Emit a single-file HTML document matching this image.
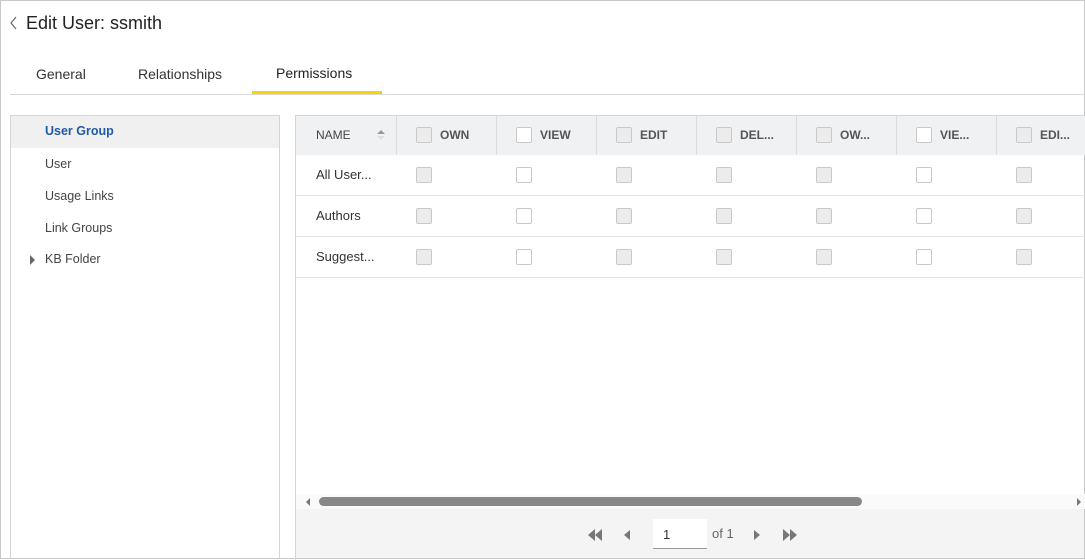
<!DOCTYPE html><html><head><style>
body{margin:0;width:1085px;height:559px;overflow:hidden;font-family:"Liberation Sans",sans-serif;background:#fff;position:relative}
.frame{position:absolute;left:0;top:0;width:1083px;height:557px;border:1px solid #c8c8c8}
.abs{position:absolute}
.cb{position:absolute;width:14px;height:14px;border:1px solid #c8c8c8;border-radius:2px;background:#ececec}
.cb.w{background:#fff}
.h{position:absolute;top:116px;height:39px;border-left:1px solid #dcdcdc;font-size:12px;font-weight:bold;color:#555;line-height:38px}
.nm{position:absolute;left:316px;font-size:13px;color:#333}
.row{position:absolute;left:296px;width:789px;height:1px;background:#e4e4e4}
.li{position:absolute;left:45px;font-size:12.5px;color:#444}
</style></head><body>
<div class="frame"></div>
<svg class="abs" style="left:9px;top:16px" width="10" height="14"><path d="M7 1L2 7l5 6" stroke="#666" fill="none" stroke-width="1.2"/></svg>
<div class="abs" style="left:26px;top:13px;font-size:18px;color:#222">Edit User: ssmith</div>
<div class="abs" style="left:36px;top:66px;font-size:14px;color:#333">General</div>
<div class="abs" style="left:138px;top:66px;font-size:14px;color:#333">Relationships</div>
<div class="abs" style="left:276px;top:65px;font-size:14px;color:#222">Permissions</div>
<div class="abs" style="left:252px;top:91px;width:130px;height:3px;background:#f5d600"></div>
<div class="abs" style="left:10px;top:94px;width:1075px;height:1px;background:#d8d8d8"></div>
<div class="abs" style="left:10px;top:115px;width:268px;height:442px;border:1px solid #d4d4d4;border-bottom:none"></div>
<div class="abs" style="left:11px;top:116px;width:268px;height:32px;background:#f0f0f0"></div>
<div class="li" style="top:124px;color:#1f5aa8;font-weight:bold">User Group</div>
<div class="li" style="top:157px">User</div>
<div class="li" style="top:189px">Usage Links</div>
<div class="li" style="top:221px">Link Groups</div>
<div class="abs" style="left:30px;top:255px;width:0;height:0;border-left:5px solid #666;border-top:5px solid transparent;border-bottom:5px solid transparent"></div>
<div class="li" style="top:252px">KB Folder</div>
<div class="abs" style="left:295px;top:115px;width:790px;height:444px;border-left:1px solid #d4d4d4;border-top:1px solid #d4d4d4"></div>
<div class="abs" style="left:296px;top:116px;width:789px;height:39px;background:#f0f1f2"></div>
<div class="h" style="left:296px;border:none;padding-left:20px;font-weight:normal;color:#444">NAME</div>
<svg class="abs" style="left:377px;top:130px" width="8" height="10"><path d="M0 4L4 0 8 4z" fill="#999"/><path d="M0 6L4 10 8 6z" fill="#ddd"/></svg>
<div class="h" style="left:396px;width:99px"><span class="cb" style="left:19px;top:11px"></span><span style="margin-left:43px">OWN</span></div>
<div class="h" style="left:496px;width:99px"><span class="cb w" style="left:19px;top:11px"></span><span style="margin-left:43px">VIEW</span></div>
<div class="h" style="left:596px;width:99px"><span class="cb" style="left:19px;top:11px"></span><span style="margin-left:43px">EDIT</span></div>
<div class="h" style="left:696px;width:99px"><span class="cb" style="left:19px;top:11px"></span><span style="margin-left:43px">DEL...</span></div>
<div class="h" style="left:796px;width:99px"><span class="cb" style="left:19px;top:11px"></span><span style="margin-left:43px">OW...</span></div>
<div class="h" style="left:896px;width:99px"><span class="cb w" style="left:19px;top:11px"></span><span style="margin-left:43px">VIE...</span></div>
<div class="h" style="left:996px;width:89px"><span class="cb" style="left:19px;top:11px"></span><span style="margin-left:43px">EDI...</span></div>
<div class="nm" style="top:167px">All User...</div>
<div class="nm" style="top:208px">Authors</div>
<div class="nm" style="top:249px">Suggest...</div>
<div class="row" style="top:195px"></div><div class="row" style="top:236px"></div><div class="row" style="top:277px"></div>
<div id="cbs"></div>
<script>
var xs=[416,516,616,716,816,916,1016],ys=[167,208,249],h='';
ys.forEach(function(y){xs.forEach(function(x,i){h+='<span class="cb'+((i==1||i==5)?' w':'')+'" style="left:'+x+'px;top:'+y+'px"></span>'})});
document.getElementById('cbs').innerHTML=h;
</script>
<div class="abs" style="left:296px;top:494px;width:789px;height:15px;background:#fafafa"></div>
<div class="abs" style="left:306px;top:498px;width:0;height:0;border-right:4px solid #777;border-top:4px solid transparent;border-bottom:4px solid transparent"></div>
<div class="abs" style="left:1077px;top:498px;width:0;height:0;border-left:4px solid #777;border-top:4px solid transparent;border-bottom:4px solid transparent"></div>
<div class="abs" style="left:319px;top:497px;width:543px;height:9px;border-radius:5px;background:#888"></div>
<div class="abs" style="left:296px;top:509px;width:788px;height:49px;background:#f4f4f4"></div>
<svg class="abs" style="left:586px;top:528px" width="220" height="14">
<path d="M2 7l7-6v12zM9 7l7-6v12z" fill="#777"/><path d="M38 7l6-5v10z" fill="#777"/>
<path d="M168 2l6 5-6 5z" fill="#777"/><path d="M197 1l7 6-7 6zM204 1l7 6-7 6z" fill="#777"/></svg>
<div class="abs" style="left:653px;top:519px;width:54px;height:29px;background:#fff;border-bottom:1px solid #999"></div>
<div class="abs" style="left:663px;top:527px;font-size:13px;color:#333">1</div>
<div class="abs" style="left:712px;top:526px;font-size:13px;color:#666">of 1</div>
</body></html>
